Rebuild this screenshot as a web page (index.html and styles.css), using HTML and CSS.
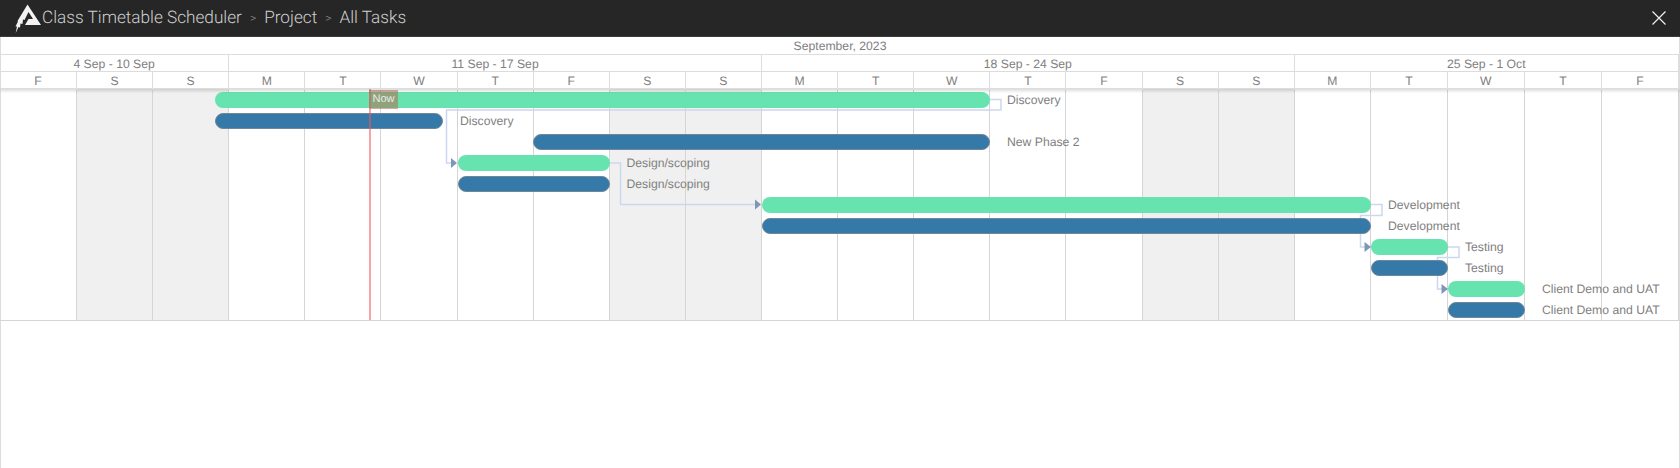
FILE: index.html
```html
<!DOCTYPE html>
<html lang="en">
<head>
  <meta charset="UTF-8" />
  <title>Class Timetable Scheduler</title>
  <link rel="stylesheet" href="styles.css">
</head>
<body>

  <header class="topbar">
    <svg class="logo" width="26" height="30" viewBox="0 0 26 30">
      <path fill="#f2f2f2" d="M12.5 0.5 L26 21 L10 21 L13.5 15 L18 15 L13.5 8 L9.5 16 L8 15.5 L7.5 20 L5.5 19.5 L5 23.5 L3.5 23 L0.7 29 L2 22.5 L0.5 22.5 L3 17.5 L2.5 17 Z"/>
    </svg>
    <div class="crumbs">
      <span>Class Timetable Scheduler</span>
      <span class="sep">&gt;</span>
      <span>Project</span>
      <span class="sep">&gt;</span>
      <span>All Tasks</span>
    </div>
    <svg class="close" width="14" height="14" viewBox="0 0 14 14">
      <path d="M0.5 0.5 L13.5 13.5 M13.5 0.5 L0.5 13.5" stroke="#f0f0f0" stroke-width="1.2" fill="none"/>
    </svg>
  </header>

  <div class="gantt">
    <div class="scale month">September, 2023</div>

    <div class="scale weeks">
      <div class="span-3">4 Sep - 10 Sep</div>
      <div class="span-7">11 Sep - 17 Sep</div>
      <div class="span-7">18 Sep - 24 Sep</div>
      <div class="span-5">25 Sep - 1 Oct</div>
    </div>

    <div class="scale days">
      <div>F</div><div>S</div><div>S</div><div>M</div><div>T</div><div>W</div><div>T</div><div>F</div>
      <div>S</div><div>S</div><div>M</div><div>T</div><div>W</div><div>T</div><div>F</div><div>S</div>
      <div>S</div><div>M</div><div>T</div><div>W</div><div>T</div><div>F</div>
    </div>

    <div class="chart">
      <div class="columns">
        <div></div><div class="off"></div><div class="off"></div><div></div><div></div><div></div><div></div><div></div>
        <div class="off"></div><div class="off"></div><div></div><div></div><div></div><div></div><div></div><div class="off"></div>
        <div class="off"></div><div></div><div></div><div></div><div></div><div></div>
      </div>

      <svg class="links" width="1680" height="231" viewBox="0 0 1680 231">
        <g fill="none" stroke="#cbd8ee" stroke-width="1.5">
          <path d="M990 10.5 H1001 V21 H446.5 V74 H452"/>
          <path d="M609 74 H620.5 V115.5 H756"/>
          <path d="M1371 115.5 H1382 V126.5 H1360.5 V158 H1366"/>
          <path d="M1448 158 H1459 V168.5 H1437.5 V200 H1443"/>
        </g>
        <g fill="#7e97b8">
          <path d="M451 69 L457 74 L451 79 Z"/>
          <path d="M755 110.5 L761 115.5 L755 120.5 Z"/>
          <path d="M1364.5 153 L1371 158 L1364.5 163 Z"/>
          <path d="M1441.5 195 L1448 200 L1441.5 205 Z"/>
        </g>
      </svg>

      <div class="row">
        <div class="bar plan" style="left:215px;width:775px"></div>
        <span class="label" style="left:1007px">Discovery</span>
      </div>
      <div class="row">
        <div class="bar real" style="left:215px;width:228px"></div>
        <span class="label" style="left:460px">Discovery</span>
      </div>
      <div class="row">
        <div class="bar real" style="left:533px;width:457px"></div>
        <span class="label" style="left:1007px">New Phase 2</span>
      </div>
      <div class="row">
        <div class="bar plan" style="left:457.5px;width:152px"></div>
        <span class="label" style="left:626.5px">Design/scoping</span>
      </div>
      <div class="row">
        <div class="bar real" style="left:457.5px;width:152px"></div>
        <span class="label" style="left:626.5px">Design/scoping</span>
      </div>
      <div class="row">
        <div class="bar plan" style="left:762px;width:609px"></div>
        <span class="label" style="left:1388px">Development</span>
      </div>
      <div class="row">
        <div class="bar real" style="left:762px;width:609px"></div>
        <span class="label" style="left:1388px">Development</span>
      </div>
      <div class="row">
        <div class="bar plan" style="left:1371px;width:77px"></div>
        <span class="label" style="left:1465px">Testing</span>
      </div>
      <div class="row">
        <div class="bar real" style="left:1371px;width:77px"></div>
        <span class="label" style="left:1465px">Testing</span>
      </div>
      <div class="row">
        <div class="bar plan" style="left:1448px;width:77px"></div>
        <span class="label" style="left:1542px">Client Demo and UAT</span>
      </div>
      <div class="row">
        <div class="bar real" style="left:1448px;width:77px"></div>
        <span class="label" style="left:1542px">Client Demo and UAT</span>
      </div>

      <div class="now-line"></div>
      <div class="now-tag">Now</div>
    </div>
  </div>

</body>
</html>
```

FILE: styles.css
```css
* {
  box-sizing: border-box;
}

body {
  margin: 0;
  height: 468px;
  overflow: hidden;
  background: #fff;
  font-family: "Liberation Sans", Arial, sans-serif;
  color: #808080;
  text-rendering: geometricPrecision;
}

.topbar {
  display: flex;
  align-items: center;
  height: 37px;
  padding: 0 14px 0 15px;
  background: #262626;
  border-bottom: 1px solid #3a3a3a;
}

.logo {
  margin: 2px 1px 0 0;
  flex: none;
}

.crumbs {
  display: flex;
  align-items: center;
  gap: 8px;
  font-family: Roboto, sans-serif;
  font-weight: 300;
  font-size: 17.2px;
  color: #cfcfcf;
}

.crumbs .sep {
  font-size: 12px;
  color: #8a8a8a;
}

.close {
  margin-left: auto;
}

.gantt {
  height: 431px;
  box-shadow: inset 1px 0 #ddd, inset -1px 0 #ddd;
}

.scale {
  height: 17.5px;
  font-size: 12.2px;
  line-height: 18px;
  text-align: center;
  border-bottom: 1px solid #ddd;
}

.weeks,
.days,
.columns {
  display: grid;
  grid-template-columns: 77px repeat(17, 76.12px) repeat(4, 77px);
}

.weeks > div,
.days > div {
  border-right: 1px solid #ddd;
}

.span-3 { grid-column: span 3; }
.span-5 { grid-column: span 5; }
.span-7 { grid-column: span 7; }

.days {
  position: relative;
  z-index: 1;
  height: 17px;
  box-shadow: 0 2px 3px rgba(0, 0, 0, 0.14);
}

.chart {
  position: relative;
  height: 232px;
  border-bottom: 1px solid #d5d5d5;
}

.columns {
  position: absolute;
  inset: 0;
}

.columns > div {
  border-right: 1px solid #d5d5d5;
}

.columns .off {
  background: #f0f0f0;
}

.links {
  position: absolute;
  top: 0;
  left: 0;
}

.row {
  position: relative;
  height: 21px;
}

.bar {
  position: absolute;
  top: 3px;
  height: 16px;
  border-radius: 8px;
}

.plan {
  background: #66e3ae;
}

.real {
  background: #3579a8;
  border: 1px solid #6f8799;
}

.label {
  position: absolute;
  top: 4px;
  font-size: 12.2px;
  line-height: 15px;
  white-space: nowrap;
}

.now-line {
  position: absolute;
  top: 0;
  bottom: 0;
  left: 368.5px;
  width: 2px;
  background: rgba(240, 90, 90, 0.55);
}

.now-tag {
  position: absolute;
  top: 1px;
  left: 369px;
  width: 29px;
  height: 19px;
  background: rgba(176, 110, 83, 0.55);
  color: #e8efe8;
  font-size: 11px;
  line-height: 18px;
  text-align: center;
}
```
